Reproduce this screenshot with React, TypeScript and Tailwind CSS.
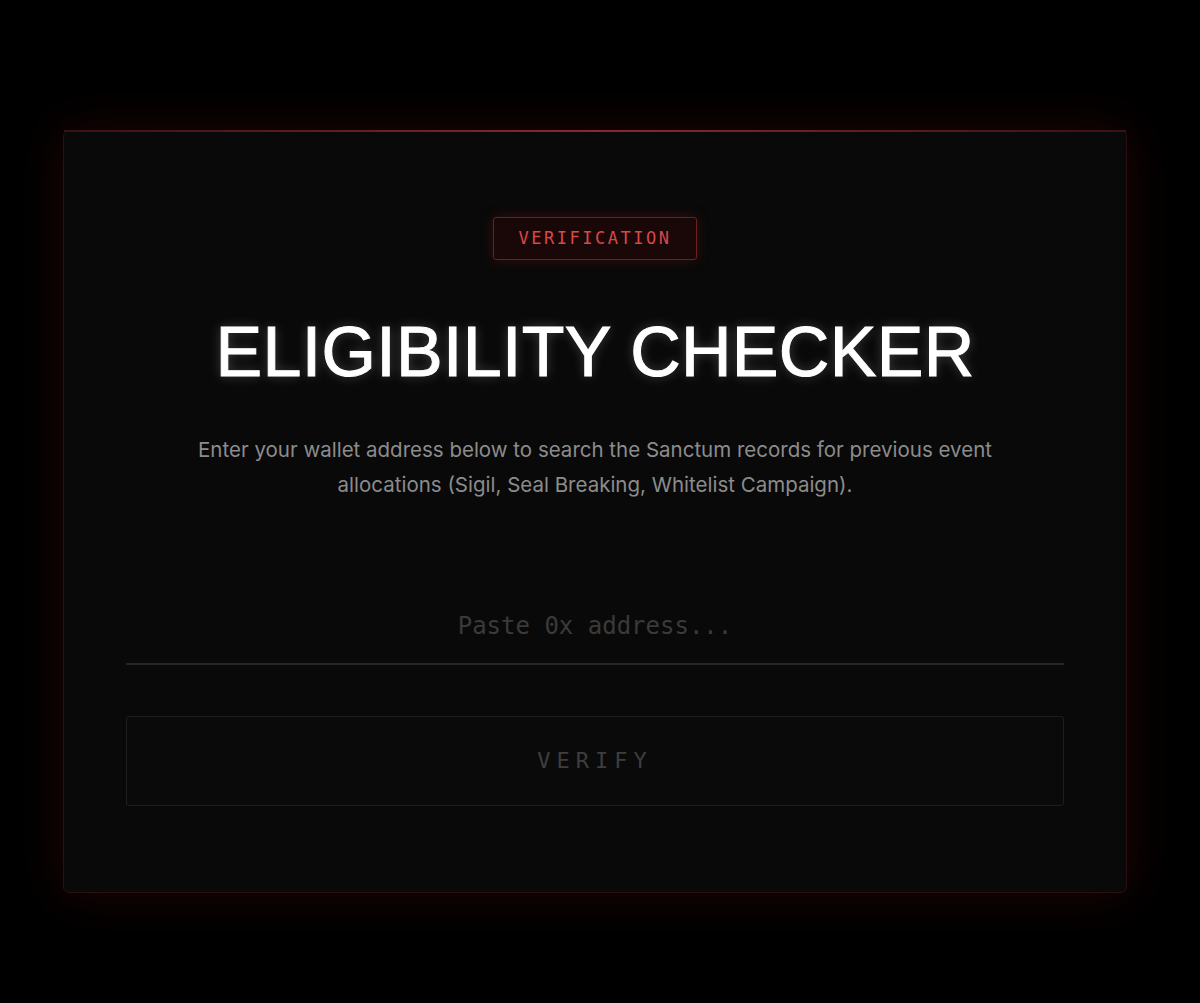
import React, { useState } from "react";

export default function App() {
  const [address, setAddress] = useState<string>("");

  return (
    <main className="min-h-screen w-full bg-black flex items-center justify-center pt-[19px] pr-[10px]">
      <div className="relative w-[1064px] rounded-[6px] border border-[#2a1010] bg-[#090909] px-[62px] pt-[86px] pb-[86px] shadow-[0_0_50px_rgba(120,20,20,0.28)]">
        {/* top glow line */}
        <div className="absolute left-0 right-0 top-[-1px] h-[2px] bg-gradient-to-r from-[#3a1212] via-[#8a2a2a] to-[#3a1212]" />

        <div className="flex flex-col items-center">
          <span className="rounded-[3px] border border-[#6e1f1f] bg-[#1a0707] px-[25px] py-[9px] font-['DejaVu_Sans_Mono',monospace] text-[17px] leading-[23px] tracking-[2.5px] text-[#d84848] shadow-[0_0_14px_rgba(180,30,30,0.25)]">
            VERIFICATION
          </span>

          <h1 className="mt-[57px] font-['Liberation_Sans',Arial,sans-serif] text-[70px] leading-[70px] tracking-[0.3px] text-white [-webkit-text-stroke:1px_white] [text-shadow:0_0_12px_rgba(255,255,255,0.25)]">
            ELIGIBILITY CHECKER
          </h1>

          <p className="mt-[45px] max-w-[860px] text-center font-['Inter',sans-serif] text-[20.5px] leading-[35px] text-[#8c8c8c]">
            Enter your wallet address below to search the Sanctum records for previous event
            allocations (Sigil, Seal Breaking, Whitelist Campaign).
          </p>

          <input
            value={address}
            onChange={(e) => setAddress(e.target.value)}
            placeholder="Paste 0x address..."
            className="mt-[87px] h-[76px] w-full border-b-2 border-[#262626] bg-transparent text-center font-['DejaVu_Sans_Mono',monospace] text-[24px] text-[#9a9a9a] outline-none placeholder:text-[#3a3a3a]"
          />

          <button className="mt-[51px] h-[90px] w-full rounded-[3px] border border-[#1e1e1e] bg-[#0a0a0a] font-['DejaVu_Sans_Mono',monospace] text-[22px] tracking-[6px] text-[#3e3e3e]">
            VERIFY
          </button>
        </div>
      </div>
    </main>
  );
}
